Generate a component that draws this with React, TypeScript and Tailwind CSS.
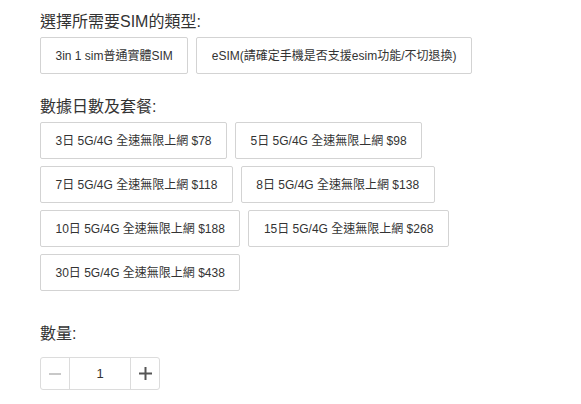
import { useState } from 'react';

const simTypes = ['3in 1 sim普通實體SIM', 'eSIM(請確定手機是否支援esim功能/不切退換)'];

const plans = [
  ['3日 5G/4G 全速無限上網 $78', '5日 5G/4G 全速無限上網 $98'],
  ['7日 5G/4G 全速無限上網 $118', '8日 5G/4G 全速無限上網 $138'],
  ['10日 5G/4G 全速無限上網 $188', '15日 5G/4G 全速無限上網 $268'],
  ['30日 5G/4G 全速無限上網 $438'],
];

function OptionButton({ label }: { label: string }) {
  return (
    <button className="h-[37px] px-[14.5px] border border-[#d3d3d3] bg-white text-[12px] text-[#333] rounded-[2px] flex items-center whitespace-nowrap">
      {label}
    </button>
  );
}

export default function App() {
  const [qty, setQty] = useState(1);

  return (
    <div
      className="min-h-screen bg-white pl-[40px] pt-[10px] text-[#333]"
      style={{ fontFamily: '"Liberation Sans", Arial, "Noto Sans CJK TC", sans-serif' }}
    >
      {/* SIM type */}
      <h2 className="text-[16px] leading-[24px] mb-[3px]">選擇所需要SIM的類型:</h2>
      <div className="flex gap-2">
        {simTypes.map((s) => (
          <OptionButton key={s} label={s} />
        ))}
      </div>

      {/* plans */}
      <h2 className="text-[16px] leading-[24px] mt-[21px] mb-[3px]">數據日數及套餐:</h2>
      <div className="flex flex-col gap-[7px]">
        {plans.map((row, i) => (
          <div key={i} className="flex gap-2">
            {row.map((p) => (
              <OptionButton key={p} label={p} />
            ))}
          </div>
        ))}
      </div>

      {/* quantity */}
      <h2 className="text-[16px] leading-[24px] mt-[31px]">數量:</h2>
      <div className="mt-[11px] flex w-[120px] h-[33px] border border-[#dcdcdc] rounded-[3px] overflow-hidden">
        <button
          onClick={() => setQty((q) => Math.max(1, q - 1))}
          className="w-[29px] flex items-center justify-center border-r border-[#dcdcdc]"
        >
          <svg width="12" height="12" viewBox="0 0 12 12">
            <path d="M0 6h12" stroke="#c8c8c8" strokeWidth="2" />
          </svg>
        </button>
        <div className="flex-1 flex items-center justify-center text-[13px] text-[#333]">{qty}</div>
        <button
          onClick={() => setQty((q) => q + 1)}
          className="w-[29px] flex items-center justify-center border-l border-[#dcdcdc]"
        >
          <svg width="13" height="13" viewBox="0 0 13 13">
            <path d="M0 6.5h13M6.5 0v13" stroke="#555" strokeWidth="2" />
          </svg>
        </button>
      </div>
    </div>
  );
}
